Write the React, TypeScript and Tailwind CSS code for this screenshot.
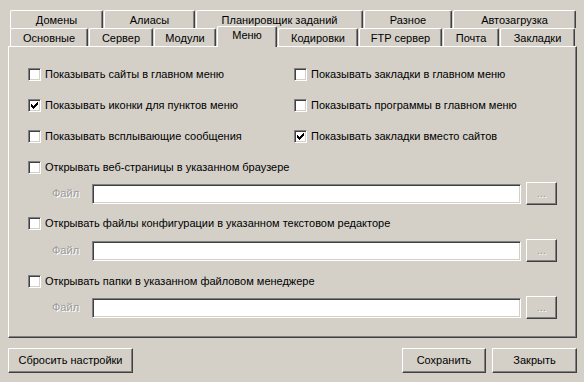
import React from "react";

const font = { fontFamily: '"Liberation Sans", Arial, sans-serif' };

function Tab({ label, w, selected }: { label: string; w: number; selected?: boolean }) {
  if (selected) {
    return (
      <div
        className="relative z-10 -mt-[2px] h-[21px] flex items-start justify-center pt-[2px] bg-[#d4d0c8] border-t border-l border-t-white border-l-white border-r border-r-[#404040] rounded-t-[2px] shadow-[inset_-1px_0_0_#808080] text-[11px] leading-[13px] text-black"
        style={{ width: w }}
      >
        {label}
      </div>
    );
  }
  return (
    <div
      className="h-[18px] flex items-center justify-center bg-[#d4d0c8] border-t border-l border-t-white border-l-white border-r border-r-[#404040] rounded-t-[2px] shadow-[inset_-1px_0_0_#808080] text-[11px] leading-[13px] text-black pt-[1px]"
      style={{ width: w }}
    >
      {label}
    </div>
  );
}

function CheckMark() {
  const px: [number, number][] = [
    [6, 0],
    [5, 1], [6, 1],
    [0, 2], [4, 2], [5, 2], [6, 2],
    [0, 3], [1, 3], [3, 3], [4, 3], [5, 3],
    [0, 4], [1, 4], [2, 4], [3, 4], [4, 4],
    [1, 5], [2, 5], [3, 5],
    [2, 6],
  ];
  return (
    <svg width="7" height="7" viewBox="0 0 7 7" shapeRendering="crispEdges" className="absolute left-[1px] top-[1px]">
      {px.map(([x, y], i) => (
        <rect key={i} x={x} y={y} width="1" height="1" fill="#000" />
      ))}
    </svg>
  );
}

function Checkbox({ checked }: { checked?: boolean }) {
  return (
    <div className="relative w-[13px] h-[13px] shrink-0 bg-white border border-t-[#808080] border-l-[#808080] border-r-white border-b-white shadow-[inset_1px_1px_0_#404040,inset_-1px_-1px_0_#d4d0c8]">
      {checked && (
        <div className="absolute left-[1px] top-[1px] w-[9px] h-[9px]">
          <CheckMark />
        </div>
      )}
    </div>
  );
}

function Check({ label, checked }: { label: string; checked?: boolean }) {
  return (
    <div className="flex items-center h-[13px]">
      <Checkbox checked={checked} />
      <span className="ml-[4px] text-[11px] leading-[13px] text-black whitespace-nowrap">{label}</span>
    </div>
  );
}

function FileRow() {
  return (
    <div className="flex items-center h-[23px] pl-[24px]">
      <span className="w-[40px] text-[11px] leading-[13px] text-[#9a9a9a] [text-shadow:1px_1px_0_#ffffff]">Файл</span>
      <div className="w-[429px] h-[20px] bg-white border border-t-[#808080] border-l-[#808080] border-r-white border-b-white shadow-[inset_1px_1px_0_#404040,inset_-1px_-1px_0_#d4d0c8]" />
      <div className="ml-[5px] w-[31px] h-[23px] flex items-center justify-center bg-[#d4d0c8] border border-t-white border-l-white border-r-[#404040] border-b-[#404040] shadow-[inset_-1px_-1px_0_#808080] text-[11px] leading-[13px] text-[#9a9a9a] [text-shadow:1px_1px_0_#ffffff]">
        ...
      </div>
    </div>
  );
}

function Button({ label, w }: { label: string; w: number }) {
  return (
    <div
      className="h-[25px] flex items-center justify-center bg-[#d4d0c8] border border-t-white border-l-white border-r-[#404040] border-b-[#404040] shadow-[inset_-1px_-1px_0_#808080] text-[11px] leading-[13px] text-black"
      style={{ width: w }}
    >
      {label}
    </div>
  );
}

export default function App() {
  return (
    <div className="w-[584px] h-[382px] bg-[#d4d0c8] overflow-hidden" style={font}>
      <div className="pt-[10px]">
        <div className="flex gap-[1px] pl-[10px]">
          <Tab label="Домены" w={93} />
          <Tab label="Алиасы" w={91} />
          <Tab label="Планировщик заданий" w={167} />
          <Tab label="Разное" w={88} />
          <Tab label="Автозагрузка" w={123} />
        </div>
        <div className="flex gap-[1px] pl-[10px] h-[18px]">
          <Tab label="Основные" w={78} />
          <Tab label="Сервер" w={64} />
          <Tab label="Модули" w={62} />
          <Tab label="Меню" w={60} selected />
          <Tab label="Кодировки" w={80} />
          <Tab label="FTP сервер" w={83} />
          <Tab label="Почта" w={56} />
          <Tab label="Закладки" w={75} />
        </div>
      </div>
      <div className="ml-[8px] w-[569px] h-[292px] border border-t-white border-l-white border-r-[#404040] border-b-[#404040] shadow-[inset_-1px_-1px_0_#808080] pl-[19px] pt-[21px] flex flex-col">
        <div className="flex">
          <div className="w-[266px]"><Check label="Показывать сайты в главном меню" /></div>
          <Check label="Показывать закладки в главном меню" />
        </div>
        <div className="flex mt-[18px]">
          <div className="w-[266px]"><Check label="Показывать иконки для пунктов меню" checked /></div>
          <Check label="Показывать программы в главном меню" />
        </div>
        <div className="flex mt-[18px]">
          <div className="w-[266px]"><Check label="Показывать всплывающие сообщения" /></div>
          <Check label="Показывать закладки вместо сайтов" checked />
        </div>
        <div className="mt-[18px]"><Check label="Открывать веб-страницы в указанном браузере" /></div>
        <div className="mt-[8px]"><FileRow /></div>
        <div className="mt-[12px]"><Check label="Открывать файлы конфигурации в указанном текстовом редакторе" /></div>
        <div className="mt-[9px]"><FileRow /></div>
        <div className="mt-[13px]"><Check label="Открывать папки в указанном файловом менеджере" /></div>
        <div className="mt-[8px]"><FileRow /></div>
      </div>
      <div className="flex mt-[10px] pl-[8px] pr-[7px]">
        <Button label="Сбросить настройки" w={125} />
        <div className="flex-1" />
        <Button label="Сохранить" w={84} />
        <div className="w-[6px]" />
        <Button label="Закрыть" w={85} />
      </div>
    </div>
  );
}
